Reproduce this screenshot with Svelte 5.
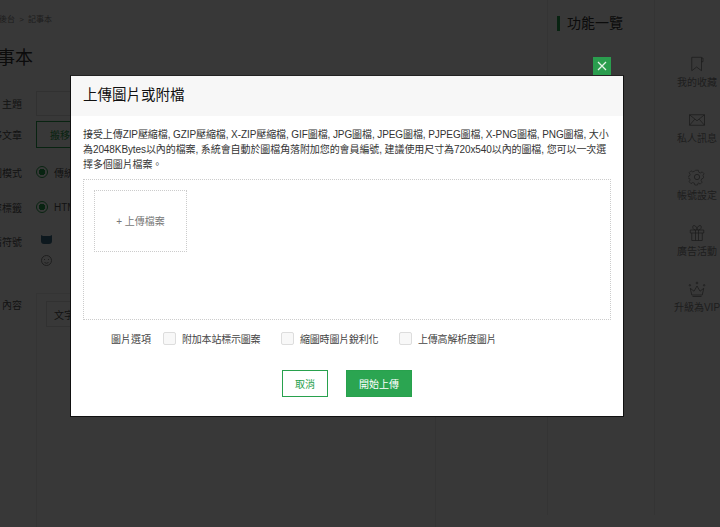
<script>
  const formats = "接受上傳ZIP壓縮檔, GZIP壓縮檔, X-ZIP壓縮檔, GIF圖檔, JPG圖檔, JPEG圖檔, PJPEG圖檔, X-PNG圖檔, PNG圖檔, 大小為2048KBytes以內的檔案, 系統會自動於圖檔角落附加您的會員編號, 建議使用尺寸為720x540以內的圖檔, 您可以一次選擇多個圖片檔案。"
  const options = ["附加本站標示圖案", "縮圖時圖片銳利化", "上傳高解析度圖片"]
</script>

<div class="page">
  <main class="main">
    <div class="crumbs">後台 &gt; 記事本</div>
    <h1>記事本</h1>
    <div class="row r-title"><span class="lbl">主題</span><span class="input"></span></div>
    <div class="row r-move"><span class="lbl">轉移文章</span><span class="ghost">搬移文章</span></div>
    <div class="row r-radio"><span class="lbl">編圖模式</span><i class="radio"></i><span>傳統</span></div>
    <div class="row r-radio2"><span class="lbl">內容標籤</span><i class="radio"></i><span>HTML</span></div>
    <div class="row r-emoji">
      <span class="lbl">表情符號</span>
      <div class="emoji">
        <svg width="13" height="12" viewBox="0 0 13 12"><path d="M1 2l2 1h7l2-1v6a3 3 0 0 1-3 3H4a3 3 0 0 1-3-3z" fill="#3d6f8a"/></svg>
        <svg width="13" height="13" viewBox="0 0 13 13" fill="none" stroke="#888"><circle cx="6.5" cy="6.5" r="5"/><path d="M4 5.5h1M8 5.5h1M4.5 8.5q2 1.500 4 0"/></svg>
      </div>
    </div>
    <div class="row r-content">
      <span class="lbl">內容</span>
      <div class="editor"><span class="tab">文字</span></div>
    </div>
  </main>

  <aside class="features">
    <h2>功能一覽</h2>
  </aside>

  <nav class="side">
    <div class="item">
      <svg viewBox="0 0 24 24"><path d="M5 3h13v18l-6.500-5L5 21zM18 4h2v5h-2"/></svg>
      <span>我的收藏</span>
    </div>
    <div class="item">
      <svg viewBox="0 0 24 24"><path d="M2 5h20v14H2zM2 5l10 8 10-8M2 19l7-8M22 19l-7-8"/></svg>
      <span>私人訊息</span>
    </div>
    <div class="item">
      <svg viewBox="0 0 24 24"><circle cx="12" cy="12" r="3.500"/><path d="M10 2h4l.7 3 2.400 1 2.600-1.600 2.800 2.800L20.900 9.800l1 2.400-.9 1.800-2 .7-1 2.400 1.600 2.600-2.800 2.800-2.600-1.600-.7.300-.7 2.700h-4l-.7-2.700-2.400-1-2.600 1.600-2.800-2.800 1.600-2.600-1-2.400-3-.7v-2l3-.7 1-2.400-1.600-2.600 2.800-2.800 2.600 1.600 2.400-1z" transform="translate(1.200 1.200) scale(.9)"/></svg>
      <span>帳號設定</span>
    </div>
    <div class="item">
      <svg viewBox="0 0 24 24"><path d="M3 8h18v4H3zM5 12v10h14V12M10 8v14M14 8v14M10 8C6 8 5 2 8 2s4 4 4 6c0-2 1-6 4-6s2 6-2 6"/></svg>
      <span>廣告活動</span>
    </div>
    <div class="item">
      <svg viewBox="0 0 24 24"><path d="M5 20l-2-9 5 4 4-7 4 7 5-4-2 9zM6 22h12"/><circle cx="12" cy="4" r="1.200"/><circle cx="2.500" cy="7" r="1"/><circle cx="21.500" cy="7" r="1"/></svg>
      <span>升級為VIP</span>
    </div>
  </nav>

  <div class="overlay">
    <section class="modal">
      <button class="close" aria-label="關閉">
        <svg width="10" height="10" viewBox="0 0 10 10"><path d="M1 1l8 8M9 1l-8 8" stroke="#e4f3e8" stroke-width="1.300"/></svg>
      </button>
      <header>上傳圖片或附檔</header>
      <div class="body">
        <p>{formats}</p>
        <div class="drop">
          <div class="tile">+ 上傳檔案</div>
        </div>
        <div class="options">
          <span class="opt-label">圖片選項</span>
          {#each options as option}
            <label><i class="check"></i>{option}</label>
          {/each}
        </div>
        <div class="actions">
          <button class="btn cancel">取消</button>
          <button class="btn start">開始上傳</button>
        </div>
      </div>
    </section>
  </div>
</div>

<style>
  :global(body) {
    margin: 0;
  }

  .page {
    position: relative;
    display: flex;
    width: 720px;
    height: 527px;
    overflow: hidden;
    background: #fff;
    color: #555;
    font-family: "Liberation Sans", "Noto Sans CJK TC", sans-serif;
    font-size: 10px;
  }

  .main {
    flex: none;
    width: 568px;
    margin-left: -21px;
    padding-top: 14px;
    box-sizing: border-box;
  }

  .crumbs {
    padding-left: 20px;
    font-size: 8px;
    word-spacing: 2px;
    line-height: 12px;
    color: #888;
  }

  h1 {
    margin: 20px 0 0;
    font-size: 18px;
    font-weight: 400;
    line-height: 24px;
    color: #333;
  }

  .row {
    display: flex;
    align-items: center;
    gap: 6px;
  }

  .lbl {
    flex: none;
    width: 43px;
    margin-right: 8px;
    text-align: right;
  }

  .r-title {
    margin-top: 20px;
    height: 26px;
  }

  .input {
    width: 300px;
    height: 25px;
    border: 1px solid #e0e0e0;
    box-sizing: border-box;
  }

  .r-move {
    margin-top: 5px;
    height: 27px;
  }

  .ghost {
    display: flex;
    align-items: center;
    width: 120px;
    height: 27px;
    padding-left: 13px;
    box-sizing: border-box;
    border: 1px solid #28a14d;
    color: #28a14d;
  }

  .r-radio {
    margin-top: 17px;
    height: 14px;
  }

  .r-radio2 {
    margin-top: 21px;
    height: 14px;
  }

  .radio {
    flex: none;
    width: 10px;
    height: 10px;
    border: 1px solid #28a14d;
    border-radius: 50%;
    background: radial-gradient(circle, #28a14d 0 3px, #fff 3.500px);
  }

  .r-emoji {
    margin-top: 17px;
    align-items: flex-start;
    height: 52px;
  }

  .r-emoji .lbl {
    margin-top: 3px;
  }

  .emoji {
    display: flex;
    flex-direction: column;
    gap: 9px;
    margin-top: 2px;
    margin-left: 4px;
  }

  .r-content {
    margin-top: 14px;
    align-items: flex-start;
  }

  .editor {
    width: 400px;
    height: 260px;
    margin-top: -4px;
    padding: 7px 9px;
    box-sizing: border-box;
    border: 1px solid #eee;
  }

  .tab {
    display: inline-flex;
    align-items: center;
    width: 60px;
    height: 26px;
    padding-left: 7px;
    box-sizing: border-box;
    border: 1px solid #e0e0e0;
  }

  .features {
    flex: none;
    width: 108px;
    height: 515px;
    padding: 16px 0 0 9px;
    box-sizing: border-box;
    border-left: 1px solid #eee;
    border-right: 1px solid #eee;
  }

  h2 {
    margin: 0;
    padding-left: 7px;
    border-left: 3px solid #28a14d;
    font-size: 14px;
    font-weight: 400;
    line-height: 15px;
    color: #333;
  }

  .side {
    flex: none;
    display: flex;
    flex-direction: column;
    gap: 14.250px;
    width: 110px;
    padding-top: 55px;
    margin-left: -13px;
    box-sizing: border-box;
  }

  .item {
    display: flex;
    flex-direction: column;
    align-items: center;
    gap: 4px;
    height: 42px;
    color: #888;
    line-height: 12px;
  }

  .item svg {
    width: 18px;
    height: 18px;
    fill: none;
    stroke: #777;
    stroke-width: 1;
  }

  .overlay {
    position: absolute;
    inset: 0;
    padding: 75px 0 0 70px;
    background: rgba(0, 0, 0, 0.78);
  }

  .modal {
    position: relative;
    width: 554px;
    height: 342px;
    box-sizing: border-box;
    border: 1px solid #111;
    border-top-color: #222;
    background: #fff;
    color: #333;
  }

  .close {
    position: absolute;
    top: -19px;
    right: 12px;
    display: flex;
    align-items: center;
    justify-content: center;
    width: 18px;
    height: 18px;
    padding: 0;
    border: none;
    background: #2a9d4e;
  }

  header {
    height: 40px;
    padding-left: 12px;
    box-sizing: border-box;
    background: #f7f7f7;
    color: #111;
    font-size: 14.500px;
    font-weight: 400;
    line-height: 39px;
  }

  .body {
    padding: 11px 12px 0;
  }

  p {
    margin: 0;
    width: 526px;
    font-size: 10px;
    letter-spacing: -0.09px;
    line-height: 15px;
    color: #333;
  }

  .drop {
    width: 528px;
    height: 141px;
    margin-top: 7px;
    padding: 10px;
    box-sizing: border-box;
    border: 1px dotted #ccc;
  }

  .tile {
    display: flex;
    align-items: center;
    justify-content: center;
    width: 93px;
    height: 62px;
    padding-bottom: 2px;
    box-sizing: border-box;
    border: 1px dotted #ccc;
    color: #777;
  }

  .options {
    display: flex;
    align-items: center;
    height: 14px;
    margin-top: 11px;
    padding-left: 28px;
    color: #444;
  }

  .opt-label {
    width: 52px;
  }

  label {
    display: flex;
    align-items: center;
    gap: 6px;
    width: 118px;
    letter-spacing: -0.2px;
  }

  .check {
    width: 13px;
    height: 13px;
    box-sizing: border-box;
    border: 1px solid #ddd;
    border-radius: 2px;
    background: #f8f8f8;
  }

  .actions {
    display: flex;
    gap: 18px;
    margin-top: 25px;
    padding-left: 199px;
  }

  .btn {
    height: 27px;
    padding: 0;
    box-sizing: border-box;
    border: 1px solid #28a14d;
    font-family: inherit;
    font-size: 10px;
  }

  .cancel {
    width: 46px;
    background: #fff;
    color: #28a14d;
  }

  .start {
    width: 66px;
    background: #2ba551;
    color: #fff;
  }
</style>
